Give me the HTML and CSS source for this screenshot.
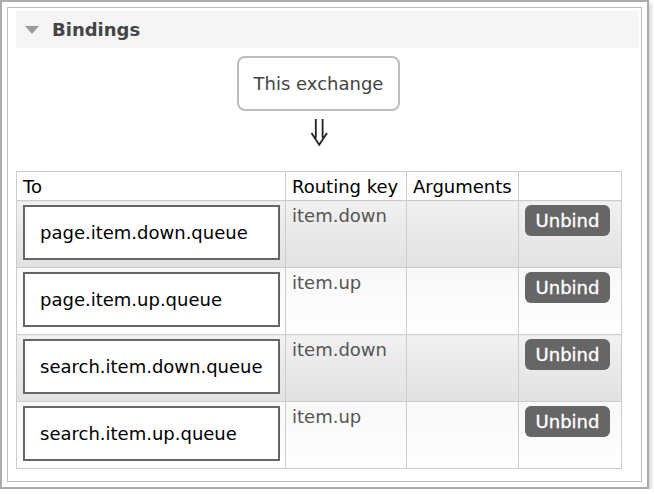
FILE: index.html
```html
<!DOCTYPE html>
<html>
<head>
<meta charset="utf-8">
<link rel="stylesheet" href="styles.css">
</head>
<body>
<div class="outer">
  <div class="inner">
    <div class="section-head">
      <span class="tri"></span>
      <span class="title">Bindings</span>
    </div>
    <div class="content">
      <div class="exch-wrap">
        <div class="exch">This exchange</div>
      </div>
      <div class="arrow-wrap">
        <svg class="arrow" width="18" height="28" viewBox="0 0 18 28">
          <path d="M5.8 1 V20 M12.6 1 V20 M1.5 15 L9.2 26.8 L17 15" fill="none" stroke="#222" stroke-width="1.8"/>
        </svg>
      </div>
      <table class="bindings">
        <colgroup>
          <col class="c-to">
          <col class="c-key">
          <col class="c-args">
          <col class="c-act">
        </colgroup>
        <thead>
          <tr>
            <th>To</th>
            <th>Routing key</th>
            <th>Arguments</th>
            <th></th>
          </tr>
        </thead>
        <tbody>
          <tr class="alt1">
            <td><div class="queue">page.item.down.queue</div></td>
            <td class="key">item.down</td>
            <td></td>
            <td><button class="unbind">Unbind</button></td>
          </tr>
          <tr class="alt0">
            <td><div class="queue">page.item.up.queue</div></td>
            <td class="key">item.up</td>
            <td></td>
            <td><button class="unbind">Unbind</button></td>
          </tr>
          <tr class="alt1">
            <td><div class="queue">search.item.down.queue</div></td>
            <td class="key">item.down</td>
            <td></td>
            <td><button class="unbind">Unbind</button></td>
          </tr>
          <tr class="alt0">
            <td><div class="queue">search.item.up.queue</div></td>
            <td class="key">item.up</td>
            <td></td>
            <td><button class="unbind">Unbind</button></td>
          </tr>
        </tbody>
      </table>
    </div>
  </div>
</div>
</body>
</html>
```

FILE: styles.css
```css
html, body {
  margin: 0;
  padding: 0;
  background: #fff;
  font-family: "DejaVu Sans", Verdana, sans-serif;
}

.outer {
  width: 649px;
  height: 489px;
  box-sizing: border-box;
  border: 2px solid #ababab;
  padding: 5px;
  box-shadow: 2px 3px 5px rgba(0, 0, 0, 0.18);
  background: #fff;
}

.inner {
  box-sizing: border-box;
  height: 475px;
  border: 1px solid #bbb;
  padding: 3px 2px 13px 8px;
}

.section-head {
  height: 37px;
  background: #f5f5f5;
  display: flex;
  align-items: center;
  padding-left: 9px;
}

.tri {
  width: 0;
  height: 0;
  border-left: 7.5px solid transparent;
  border-right: 7.5px solid transparent;
  border-top: 8px solid #9a9a9a;
  margin-right: 13px;
}

.title {
  font-weight: bold;
  font-size: 18px;
  color: #444;
}

.content {
  width: 605px;
  padding-top: 8px;
}

.exch-wrap {
  display: flex;
  justify-content: center;
}

.exch {
  box-sizing: border-box;
  width: 163px;
  height: 55px;
  border: 2px solid #bdbdbd;
  border-radius: 8px;
  display: flex;
  align-items: center;
  justify-content: center;
  font-size: 18px;
  color: #444;
}

.arrow-wrap {
  height: 60px;
  display: flex;
  justify-content: center;
}

.arrow {
  margin-top: 7px;
  display: block;
}

.bindings {
  width: 605px;
  border-collapse: collapse;
  table-layout: fixed;
  border: 1px solid #ccc;
}

.c-to { width: 269px; }
.c-key { width: 121px; }
.c-args { width: 112px; }
.c-act { width: 103px; }

.bindings th {
  height: 28px;
  padding: 0 6px;
  border: 1px solid #ccc;
  text-align: left;
  font-weight: normal;
  font-size: 18px;
  color: #000;
  background: #fff;
  white-space: nowrap;
}

.bindings td {
  height: 55px;
  padding: 4px 5px 7px 6px;
  border: 1px solid #ccc;
  vertical-align: top;
}

.alt1 td {
  background: linear-gradient(#f1f1f1, #e1e1e1);
}

.alt0 td {
  background: linear-gradient(#f8f8f8, #fefefe);
}

.queue {
  box-sizing: border-box;
  width: 257px;
  height: 55px;
  border: 2px solid #666;
  background: #fff;
  padding-left: 15px;
  display: flex;
  align-items: center;
  font-size: 18px;
  color: #000;
  white-space: nowrap;
}

.key {
  font-size: 18px;
  color: #555;
  line-height: 22px;
}

.unbind {
  display: block;
  box-sizing: border-box;
  width: 85px;
  height: 31px;
  border: none;
  border-radius: 6px;
  background: #666;
  color: #fff;
  font-family: "DejaVu Sans", Verdana, sans-serif;
  font-weight: normal;
  font-size: 18px;
  -webkit-text-stroke: 0.35px #fff;
  padding: 0;
  margin: 0;
}
```
